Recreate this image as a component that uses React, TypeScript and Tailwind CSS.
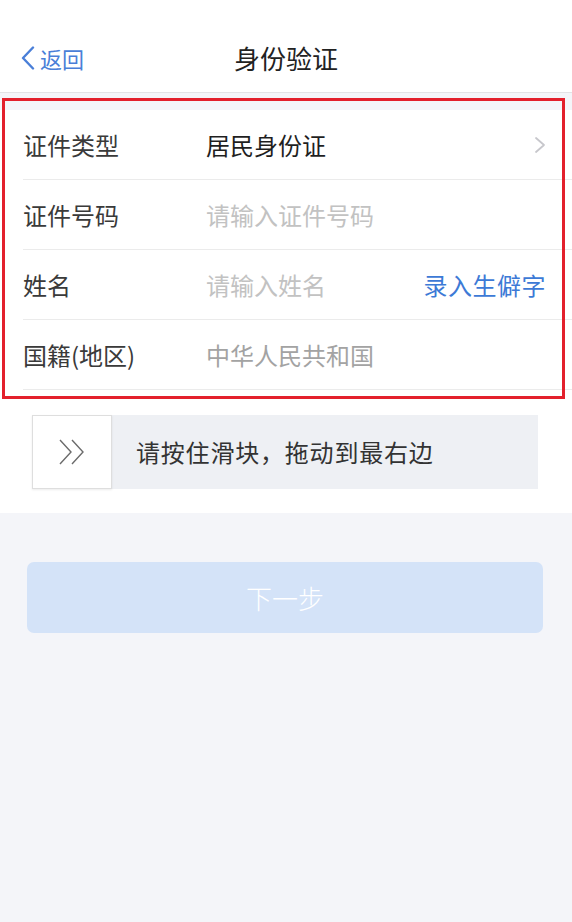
import React from 'react'

const rows = [
  { label: '证件类型', value: '居民身份证', kind: 'select' },
  { label: '证件号码', value: '请输入证件号码', kind: 'placeholder' },
  { label: '姓名', value: '请输入姓名', kind: 'name' },
  { label: '国籍(地区)', value: '中华人民共和国', kind: 'fixed' },
]

export default function App() {
  return (
    <div
      className="relative min-h-[922px] w-[572px] bg-[#f4f5f9]"
      style={{ fontFamily: '"Noto Sans CJK SC", "Noto Sans", sans-serif' }}
    >
      {/* 顶部导航 */}
      <div className="bg-white pt-6 border-b border-[#e3e3e6]">
        <div className="relative h-[68px] flex items-center justify-center">
          <div className="absolute left-[20px] top-0 h-full flex items-center text-[#4a7fd8]">
            <svg width="16" height="24" viewBox="0 0 16 24" className="mr-[4px]">
              <path d="M13 1.5 L3 12 L13 22.5" fill="none" stroke="currentColor" strokeWidth="2.4" strokeLinecap="round" strokeLinejoin="round" />
            </svg>
            <span className="text-[22px] leading-none">返回</span>
          </div>
          <h1 className="text-[26px] leading-none text-[#222]">身份验证</h1>
        </div>
      </div>

      <div className="h-[17px]" />

      {/* 表单 */}
      <div className="bg-white">
        {rows.map((row) => (
          <div key={row.label} className="pl-[23px]">
            <div className="h-[70px] flex items-center border-b border-[#ebebeb] pr-[26px]">
              <span className="w-[183px] text-[24px] text-[#3a3a3a]">{row.label}</span>
              <span
                className={
                  'flex-1 text-[24px] ' +
                  (row.kind === 'select'
                    ? 'text-[#1f1f1f]'
                    : row.kind === 'fixed'
                    ? 'text-[#a3a3a3]'
                    : 'text-[#c2c2c2]')
                }
              >
                {row.value}
              </span>
              {row.kind === 'select' && (
                <svg width="12" height="18" viewBox="0 0 12 18">
                  <path d="M2 2 L10 9 L2 16" fill="none" stroke="#c7c7cc" strokeWidth="1.8" strokeLinecap="round" strokeLinejoin="round" />
                </svg>
              )}
              {row.kind === 'name' && <span className="text-[24px] tracking-[0.5px] text-[#3d7ad6]">录入生僻字</span>}
            </div>
          </div>
        ))}

        {/* 滑块 */}
        <div className="pt-[25px] pb-[24px] px-[32px]">
          <div className="h-[74px] w-[506px] flex items-center bg-[#eef0f4]">
            <div className="h-full w-[80px] bg-white border border-[#dedede] shadow-[0_1px_2px_rgba(0,0,0,0.08)] flex items-center justify-center">
              <svg width="28" height="26" viewBox="0 0 28 26">
                <path d="M2 1 L13 13 L2 25" fill="none" stroke="#6b6b6b" strokeWidth="1.4" />
                <path d="M14 1 L25 13 L14 25" fill="none" stroke="#6b6b6b" strokeWidth="1.4" />
              </svg>
            </div>
            <span className="ml-[24px] text-[24px] tracking-[0.8px] text-[#333]">请按住滑块，拖动到最右边</span>
          </div>
        </div>
      </div>

      {/* 下一步 */}
      <div className="pl-[27px] pt-[49px]">
        <div className="h-[71px] w-[516px] rounded-[7px] bg-[#d4e3f8] flex items-center justify-center">
          <span className="text-[26px] font-light text-white">下一步</span>
        </div>
      </div>

      {/* 标注框 */}
      <div className="absolute left-[2px] top-[98px] w-[563px] h-[301px] border-[3px] border-[#e3202c] pointer-events-none" />
    </div>
  )
}
